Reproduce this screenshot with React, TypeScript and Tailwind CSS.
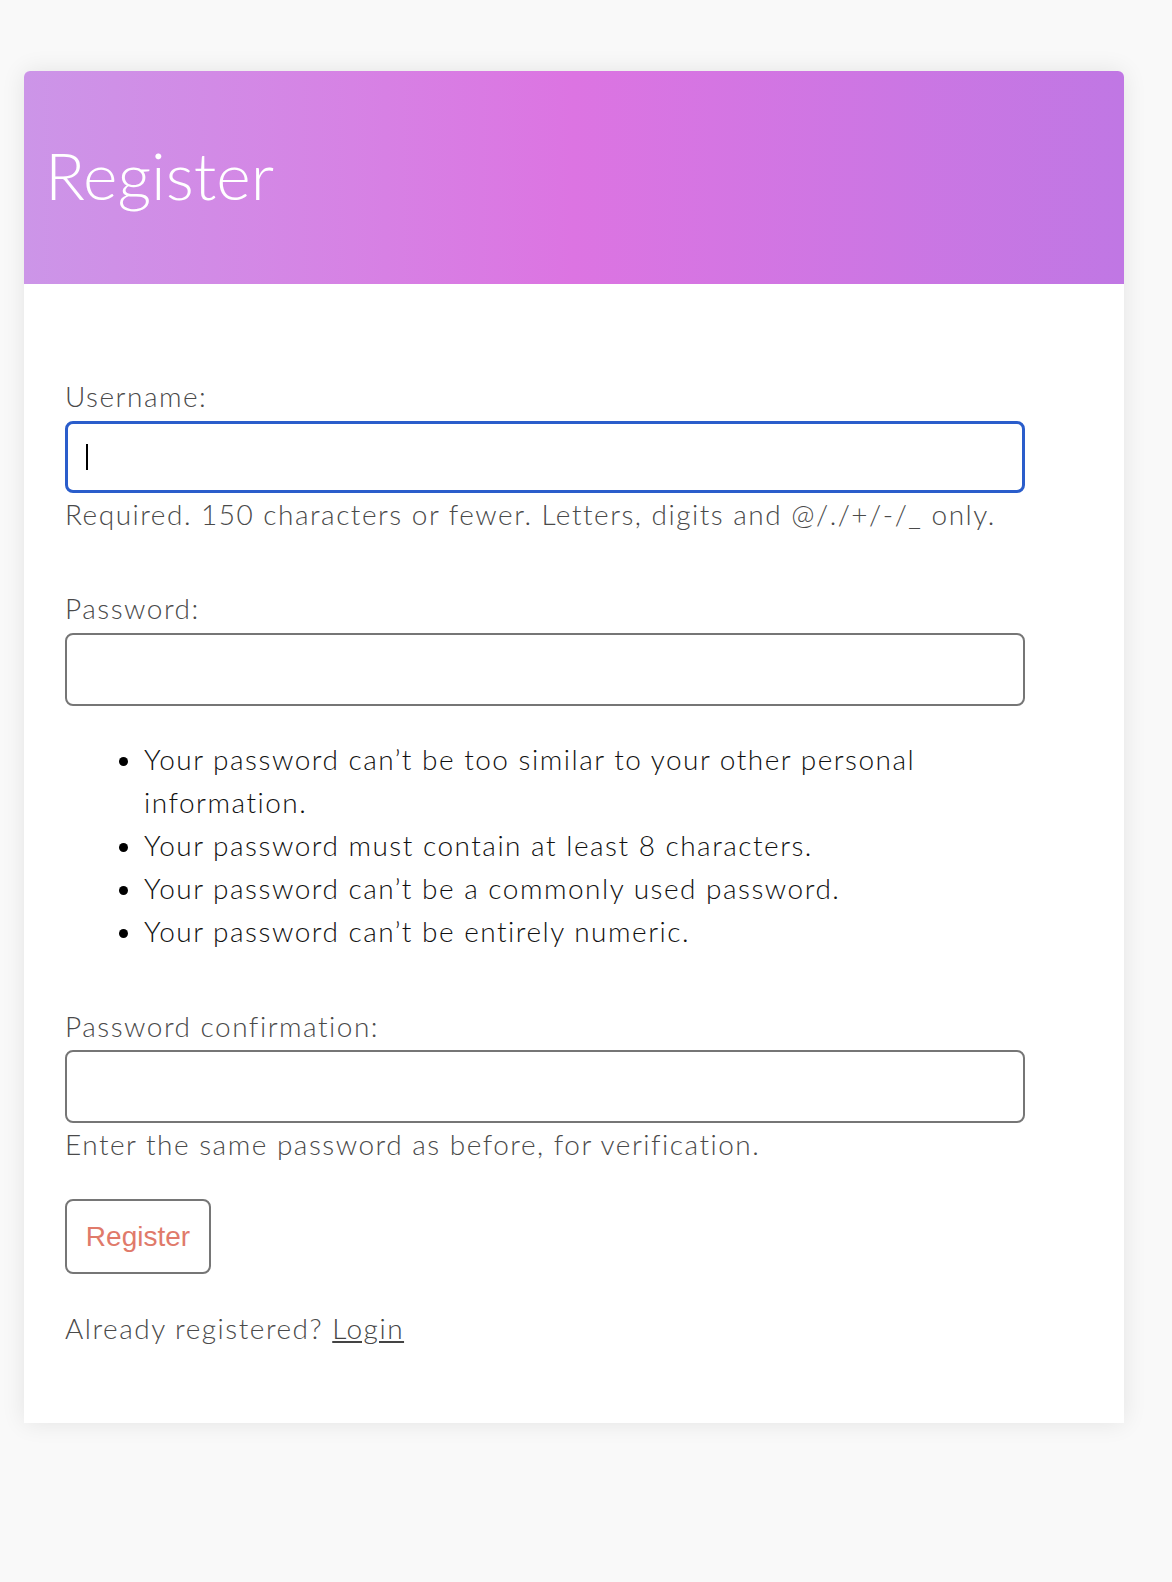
export default function App() {
  return (
    <div className="min-h-screen bg-[#f9f9f9] pt-[71px] pl-[24px] pr-[48px] font-['Lato',sans-serif]">
      <div className="w-[1100px] bg-white rounded-t-md shadow-[0_0_24px_rgba(0,0,0,0.09)]">
        {/* Header */}
        <div className="h-[213px] rounded-t-md bg-linear-to-r from-[#cc95e8] via-[#dc74e2] to-[#c077e4] flex items-center pl-[21px]">
          <h1 className="text-[66px] font-light text-white leading-none -mt-[6px]">Register</h1>
        </div>

        {/* Form */}
        <form className="px-[41px] pt-[91px] pb-[73px] text-[28px] leading-[43px] tracking-[1.5px] font-light text-[#4a4a4a]">
          <label className="block">Username:</label>
          <div className="relative mt-[3px] w-[960px]">
            <input
              type="text"
              className="block w-full h-[72px] rounded-lg border-[3px] border-[#2a5dcb] bg-white outline-none"
            />
            <span className="absolute left-[21px] top-[23px] w-[2px] h-[26px] bg-black" />
          </div>
          <p>Required. 150 characters or fewer. Letters, digits and @/./+/-/_ only.</p>

          <label className="block mt-[51px]">Password:</label>
          <input
            type="password"
            className="block mt-[3px] w-[960px] h-[73px] rounded-lg border-2 border-[#767676] bg-white outline-none"
          />
          <ul className="mt-[32px] pl-[79px] list-disc text-[#111] marker:text-black">
            <li>Your password can’t be too similar to your other personal<br />information.</li>
            <li>Your password must contain at least 8 characters.</li>
            <li>Your password can’t be a commonly used password.</li>
            <li>Your password can’t be entirely numeric.</li>
          </ul>

          <label className="block mt-[52px]">Password confirmation:</label>
          <input
            type="password"
            className="block mt-[2px] w-[960px] h-[73px] rounded-lg border-2 border-[#767676] bg-white outline-none"
          />
          <p>Enter the same password as before, for verification.</p>

          <button
            type="button"
            className="mt-[33px] block w-[146px] h-[75px] rounded-lg border-2 border-[#767676] bg-white text-[28px] tracking-normal font-normal text-[#e07a6a] font-['Liberation_Sans',sans-serif]"
          >
            Register
          </button>

          <p className="mt-[33px]">
            Already registered? <a href="#" className="underline text-[#444]">Login</a>
          </p>
        </form>
      </div>
    </div>
  );
}
